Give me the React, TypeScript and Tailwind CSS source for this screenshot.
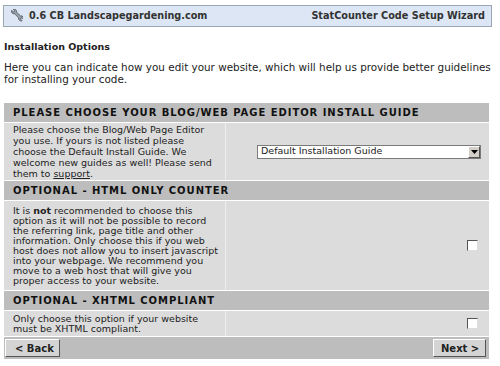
import React from 'react';

const font = { fontFamily: 'Verdana, "DejaVu Sans", sans-serif' };

function Wrench() {
  return (
    <svg width="14" height="14" viewBox="0 0 16 16" className="shrink-0">
      <path
        d="M3 1.5a3 3 0 0 0 3.4 4l4.6 4.6a3 3 0 0 0 4 3.4l-1.8-1.8.3-1.3 1.3-.3 1.8 1.8a3 3 0 0 0-3.4-4L8.6 3.5a3 3 0 0 0-4-3.4l1.8 1.8-.3 1.3-1.3.3z"
        fill="#9aa3ad"
        stroke="#4a5058"
        strokeWidth="0.9"
        strokeLinejoin="round"
      />
    </svg>
  );
}

function Header({ children }: { children: React.ReactNode }) {
  return (
    <div className="bg-[#bdbdbd] h-[20px] flex items-center pl-[9px] border-b border-white text-[10px] font-bold tracking-[0.95px] text-[#111]">
      {children}
    </div>
  );
}

function Checkbox() {
  return (
    <span className="block w-[11px] h-[11px] bg-white border border-t-[#555] border-l-[#555] border-r-[#ddd] border-b-[#ddd]" />
  );
}

export default function App() {
  return (
    <div className="w-[500px] h-[366px] bg-white text-[#222] overflow-hidden" style={font}>
      <div className="mx-[3px] mt-[5px] w-[489px] h-[22px] bg-[#dce6f4] border border-[#9aa6b4] flex items-center px-[5px] text-[9.7px] font-bold text-[#333]">
        <Wrench />
        <span className="ml-[6px]">0.6 CB Landscapegardening.com</span>
        <span className="ml-auto mr-[1px]">StatCounter Code Setup Wizard</span>
      </div>

      <div className="px-[4px] mt-[14px] text-[9.5px] leading-[12px] font-bold">Installation Options</div>
      <p className="px-[4px] mt-[8px] text-[10.4px] leading-[12px]">
        Here you can indicate how you edit your website, which will help us provide better guidelines for installing your code.
      </p>

      <div className="ml-[4px] mt-[18px] w-[485px] text-[9.5px]">
        <Header>PLEASE CHOOSE YOUR BLOG/WEB PAGE EDITOR INSTALL GUIDE</Header>
        <div className="grid grid-cols-[222px_1fr] h-[58px] bg-[#dcdcdc] border-b border-white">
          <div className="pl-[9px] pr-[3px] flex items-center leading-[11px] border-r border-[#eeeeee]">
            <div>
              Please choose the Blog/Web Page Editor you use. If yours is not listed please
              <br />
              choose the Default Install Guide. We welcome new guides as well! Please send them to <span className="underline">support</span>.
            </div>
          </div>
          <div className="flex items-center pl-[31px]">
            <div className="w-[224px] h-[14px] bg-white border border-[#7a7a7a] flex items-center">
              <span className="pl-[3px] flex-1">Default Installation Guide</span>
              <span className="w-[12px] h-[12px] bg-[#d4d0c8] border border-t-white border-l-white border-r-[#555] border-b-[#555] flex items-center justify-center">
                <svg width="7" height="4" viewBox="0 0 7 4"><path d="M0 0h7L3.5 4z" fill="#000" /></svg>
              </span>
            </div>
          </div>
        </div>

        <Header>OPTIONAL - HTML ONLY COUNTER</Header>
        <div className="grid grid-cols-[222px_1fr] h-[90px] bg-[#dcdcdc] border-b border-white">
          <div className="pl-[9px] pr-[3px] flex items-center leading-[10px] border-r border-[#eeeeee]">
            <div>
              It is <b>not</b> recommended to choose this option as it will not be possible to record the referring link, page title and other information. Only choose this if you web host does not allow you to insert javascript into your webpage. We recommend you move to a web host that will give you proper access to your website.
            </div>
          </div>
          <div className="flex items-center justify-end pr-[11px]">
            <Checkbox />
          </div>
        </div>

        <Header>OPTIONAL - XHTML COMPLIANT</Header>
        <div className="grid grid-cols-[222px_1fr] h-[26px] bg-[#dcdcdc] border-b border-white">
          <div className="pl-[9px] pr-[8px] flex items-center leading-[10px] border-r border-[#eeeeee]">
            <div>Only choose this option if your website must be XHTML compliant.</div>
          </div>
          <div className="flex items-center justify-end pr-[11px]">
            <Checkbox />
          </div>
        </div>

        <div className="bg-[#bdbdbd] h-[22px] flex items-center justify-between pl-[1px] pr-[3px]">
          <button className="h-[18px] w-[55px] bg-[#d4d4d4] border border-t-white border-l-white border-r-[#555] border-b-[#555] text-[10px] font-bold text-left pl-[9px] text-[#222]">
            &lt; Back
          </button>
          <button className="h-[18px] w-[53px] bg-[#d4d4d4] border border-t-white border-l-white border-r-[#555] border-b-[#555] text-[10px] font-bold text-left pl-[7px] text-[#222]">
            Next &gt;
          </button>
        </div>
      </div>
    </div>
  );
}
